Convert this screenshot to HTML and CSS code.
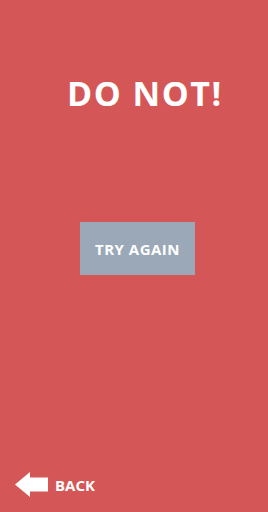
FILE: index.html
```html
<!DOCTYPE html>
<html lang="en">
<head>
    <meta charset="UTF-8">
    <meta name="viewport" content="width=device-width, initial-scale=1.0">
    <title>Do not!</title>
    <link rel="stylesheet" href="styles.css">
</head>
<body>
    <div class="screen">
        <h1 class="title">DO NOT!</h1>
        <button class="retry">TRY AGAIN</button>
        <a class="back" href="#">
            <svg class="back-icon" width="33" height="25" viewBox="0 0 33 25">
                <polygon points="0,12.5 15,0 15,5.5 33,5.5 33,19.5 15,19.5 15,25" fill="#fff"/>
            </svg>
            <span>BACK</span>
        </a>
    </div>
</body>
</html>
```

FILE: styles.css
```css
html, body {
    margin: 0;
    padding: 0;
}

body {
    font-family: 'Open Sans', 'Liberation Sans', sans-serif;
    background-color: #d55656;
    color: #fff;
}

.screen {
    display: flex;
    flex-direction: column;
    height: 512px;
    box-sizing: border-box;
}

.title {
    margin: 73px 0 0 67px;
    font-size: 34px;
    font-weight: 700;
    line-height: 40px;
    letter-spacing: 1.5px;
}

.retry {
    align-self: flex-start;
    margin: 109px 0 0 80px;
    width: 115px;
    height: 53px;
    border: none;
    padding: 0;
    background-color: #9aa8b8;
    color: #fff;
    font-family: inherit;
    font-size: 15px;
    font-weight: 700;
    letter-spacing: 0.5px;
}

.back {
    margin-top: auto;
    margin-bottom: 15px;
    margin-left: 15px;
    display: flex;
    align-items: center;
    gap: 7px;
    color: #fff;
    text-decoration: none;
    font-size: 15px;
    font-weight: 700;
}

.back-icon {
    display: block;
}
```
